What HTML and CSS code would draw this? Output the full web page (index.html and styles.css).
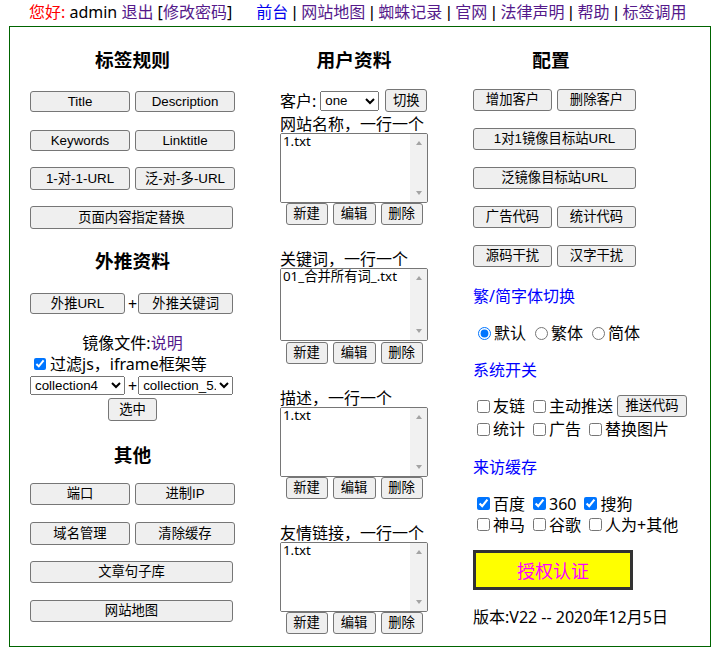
FILE: index.html
```html
<!DOCTYPE html>
<html lang="zh-CN">
<head>
<meta charset="utf-8">
<title>后台管理</title>
<link rel="stylesheet" href="styles.css">
</head>
<body>
<div class="topbar"><span class="hi">您好:</span> admin <a href="#" class="lv">退出</a> [<a href="#" class="lv">修改密码</a>]<span class="spacer"></span><a href="#" class="lb">前台</a><span class="sep"> | </span><a href="#" class="lv">网站地图</a><span class="sep"> | </span><a href="#" class="lv">蜘蛛记录</a><span class="sep"> | </span><a href="#" class="lv">官网</a><span class="sep"> | </span><a href="#" class="lv">法律声明</a><span class="sep"> | </span><a href="#" class="lv">帮助</a><span class="sep"> | </span><a href="#" class="lv">标签调用</a></div>
<div class="main">
  <div class="col col-left">
    <h3 class="hd">标签规则</h3>
    <div class="pair mt19 h21"><button>Title</button><button>Description</button></div>
    <div class="pair mt18 h21"><button>Keywords</button><button>Linktitle</button></div>
    <div class="pair mt16 h23"><button>1-对-1-URL</button><button>泛-对-多-URL</button></div>
    <div class="wide mt16 h23"><button>页面内容指定替换</button></div>
    <h3 class="hd mt20">外推资料</h3>
    <div class="plusrow mt20 h21"><button>外推URL</button><span class="plus">+</span><button>外推关键词</button></div>
    <div class="line mt19 center">镜像文件:<a href="#" class="lv">说明</a></div>
    <div class="line filt mt1"><input type="checkbox" class="small" checked>过滤js，iframe框架等</div>
    <div class="plusrow mt2 h19">
      <select><option>collection4</option></select><span class="plus">+</span><select><option>collection_5.txt</option></select>
    </div>
    <button class="pick mt3">选中</button>
    <h3 class="hd mt22">其他</h3>
    <div class="pair mt16 h22"><button>端口</button><button>进制IP</button></div>
    <div class="pair mt17 h23"><button>域名管理</button><button>清除缓存</button></div>
    <div class="wide mt16 h22"><button>文章句子库</button></div>
    <div class="wide mt17 h22"><button>网站地图</button></div>
  </div>

  <div class="col col-mid">
    <h3 class="hd">用户资料</h3>
    <div class="kh mt17"><span class="khl">客户:</span><select class="cust"><option>one</option></select><button class="sw">切换</button></div>
    <div class="lbl mt3">网站名称，一行一个</div>
    <div class="ta"><textarea>1.txt</textarea><div class="sb"><span class="up"></span><span class="dn"></span></div></div>
    <div class="fbtns"><button>新建</button><button class="w43">编辑</button><button>删除</button></div>
    <div class="lbl mt25">关键词，一行一个</div>
    <div class="ta ta-tall"><textarea>01_合并所有词_.txt</textarea><div class="sb"><span class="up"></span><span class="dn"></span></div></div>
    <div class="fbtns mt1"><button>新建</button><button class="w43">编辑</button><button>删除</button></div>
    <div class="lbl mt25">描述，一行一个</div>
    <div class="ta"><textarea>1.txt</textarea><div class="sb"><span class="up"></span><span class="dn"></span></div></div>
    <div class="fbtns"><button>新建</button><button class="w43">编辑</button><button>删除</button></div>
    <div class="lbl mt25">友情链接，一行一个</div>
    <div class="ta"><textarea>1.txt</textarea><div class="sb"><span class="up"></span><span class="dn"></span></div></div>
    <div class="fbtns"><button>新建</button><button class="w43">编辑</button><button>删除</button></div>
  </div>

  <div class="col col-right">
    <h3 class="hd hd-right">配置</h3>
    <div class="pair pair-r mt17 h22"><button>增加客户</button><button>删除客户</button></div>
    <div class="wide wide-r mt17 h22"><button>1对1镜像目标站URL</button></div>
    <div class="wide wide-r mt17 h22"><button>泛镜像目标站URL</button></div>
    <div class="pair pair-r mt17 h22"><button>广告代码</button><button>统计代码</button></div>
    <div class="pair pair-r mt17 h22"><button>源码干扰</button><button>汉字干扰</button></div>
    <div class="line sect mt19">繁/简字体切换</div>
    <div class="optrow mt17 h20">
      <label class="opt"><input type="radio" name="font" checked>默认</label>
      <label class="opt"><input type="radio" name="font">繁体</label>
      <label class="opt"><input type="radio" name="font">简体</label>
    </div>
    <div class="line sect mt17">系统开关</div>
    <div class="optrow mt15 h22">
      <label class="opt"><input type="checkbox">友链</label>
      <label class="opt"><input type="checkbox">主动推送</label>
      <button class="push">推送代码</button>
    </div>
    <div class="optrow mt2 h20">
      <label class="opt"><input type="checkbox">统计</label>
      <label class="opt"><input type="checkbox">广告</label>
      <label class="opt"><input type="checkbox">替换图片</label>
    </div>
    <div class="line sect mt18">来访缓存</div>
    <div class="optrow mt16 h21">
      <label class="opt"><input type="checkbox" checked>百度</label>
      <label class="opt"><input type="checkbox" checked>360</label>
      <label class="opt"><input type="checkbox" checked>搜狗</label>
    </div>
    <div class="optrow h21">
      <label class="opt"><input type="checkbox">神马</label>
      <label class="opt"><input type="checkbox">谷歌</label>
      <label class="opt"><input type="checkbox">人为+其他</label>
    </div>
    <button class="auth mt15">授权认证</button>
    <div class="line mt17">版本:V22 -- 2020年12月5日</div>
  </div>
</div>
</body>
</html>
```

FILE: styles.css
```css
* { box-sizing: border-box; }
html, body { margin: 0; padding: 0; background: #fff; }
body {
  font-family: "Noto Sans", "Noto Sans CJK SC", sans-serif;
  font-size: 16px;
  line-height: 20px;
  color: #000;
}
a { text-decoration: none; }
.lv { color: #551a8b; }
.lb { color: #0000ee; }
.hi { color: #ff0000; }

.topbar {
  height: 26px;
  padding: 2px 0 0 29px;
  white-space: nowrap;
}
.spacer { display: inline-block; width: 24px; }
.sep { font-family: "Liberation Sans", sans-serif; white-space: pre; }

.main {
  margin-left: 9px;
  width: 702px;
  height: 621px;
  border: 1px solid #006400;
  display: grid;
  grid-template-columns: 245px 197px 258px;
}
.col { display: flex; flex-direction: column; }
.col-left { padding: 0 20px; }
.col-mid { padding: 0 24px 0 25px; }
.col-right { padding-left: 21px; }

.hd {
  margin: 21px 0 0;
  height: 24px;
  font-size: 18.72px;
  font-weight: bold;
  line-height: 24px;
  text-align: center;
}
.hd-right { width: 156px; }

button {
  font-family: "Liberation Sans", "Noto Sans CJK SC", sans-serif;
  font-size: 13.33px;
  color: #000;
  background: #efefef;
  border: 1px solid #767676;
  border-radius: 3px;
  padding: 0;
  margin: 0;
  line-height: 1;
}
select {
  font-family: "Liberation Sans", "Noto Sans CJK SC", sans-serif;
  font-size: 13.33px;
  color: #000;
  margin: 0;
}

.pair { display: flex; gap: 5px; }
.pair button { width: 100px; height: 100%; }
.pair-r button { width: 79px; }
.wide { display: flex; }
.wide button { width: 203px; height: 100%; }
.wide-r button { width: 163px; }

.plusrow { display: flex; align-items: center; }
.plusrow button, .plusrow select { width: 95px; height: 100%; }
.plus { margin: 0 1px 0 3px; }

.line { height: 20px; }
.center { text-align: center; }
.filt { display: flex; align-items: center; white-space: nowrap; }
input.small { width: 12px; height: 12px; margin: 0 4px; }

.pick { align-self: center; width: 49px; height: 23px; }

.kh { display: flex; align-items: center; height: 23px; }
.khl { margin-right: 4px; }
.cust { width: 59px; height: 20px; margin-right: 6px; }
.sw { width: 42px; height: 23px; }

.lbl { height: 18px; line-height: 18px; white-space: nowrap; }
.ta {
  display: flex;
  height: 70px;
  border: 1px solid #767676;
  border-radius: 2px;
  overflow: hidden;
  background: #fff;
}
.ta-tall { height: 73px; }
.ta textarea {
  flex: 1;
  min-width: 0;
  border: 0;
  margin: 0;
  padding: 0 2px;
  resize: none;
  outline: none;
  overflow: hidden;
  font-family: "Noto Sans", "Noto Sans CJK SC", sans-serif;
  font-size: 13.33px;
  line-height: 14px;
  color: #000;
  background: #fff;
}
.sb {
  width: 17px;
  background: #f1f1f1;
  display: flex;
  flex-direction: column;
  justify-content: space-between;
  align-items: center;
  padding: 7px 0;
}
.up {
  width: 0; height: 0;
  border-left: 3.5px solid transparent;
  border-right: 3.5px solid transparent;
  border-bottom: 4px solid #a3a3a3;
}
.dn {
  width: 0; height: 0;
  border-left: 3.5px solid transparent;
  border-right: 3.5px solid transparent;
  border-top: 4px solid #a3a3a3;
}
.fbtns { display: flex; justify-content: center; gap: 5px; height: 22px; }
.fbtns button { width: 42px; height: 22px; }
.fbtns .w43 { width: 43px; }

.sect { color: #0000ff; }
.optrow { display: flex; align-items: center; white-space: nowrap; }
.opt { display: inline-flex; align-items: center; margin-right: 4px; }
.opt input[type="checkbox"] { width: 13px; height: 13px; margin: 0 3px 0 4px; }
.opt input[type="radio"] { width: 13px; height: 13px; margin: 0 3px 0 5px; }
.push { width: 70px; height: 22px; }

.auth {
  width: 160px;
  height: 40px;
  background: #ffff00;
  border: 3px solid #333;
  border-radius: 0;
  color: #ff00ff;
  font-family: "Noto Sans CJK SC", sans-serif;
  font-size: 18px;
}

.mt1 { margin-top: 1px; }
.mt2 { margin-top: 2px; }
.mt3 { margin-top: 3px; }
.mt15 { margin-top: 15px; }
.mt16 { margin-top: 16px; }
.mt17 { margin-top: 17px; }
.mt18 { margin-top: 18px; }
.mt19 { margin-top: 19px; }
.mt20 { margin-top: 20px; }
.mt22 { margin-top: 22px; }
.mt25 { margin-top: 25px; }
.h19 { height: 19px; }
.h20 { height: 20px; }
.h21 { height: 21px; }
.h22 { height: 22px; }
.h23 { height: 23px; }
```
